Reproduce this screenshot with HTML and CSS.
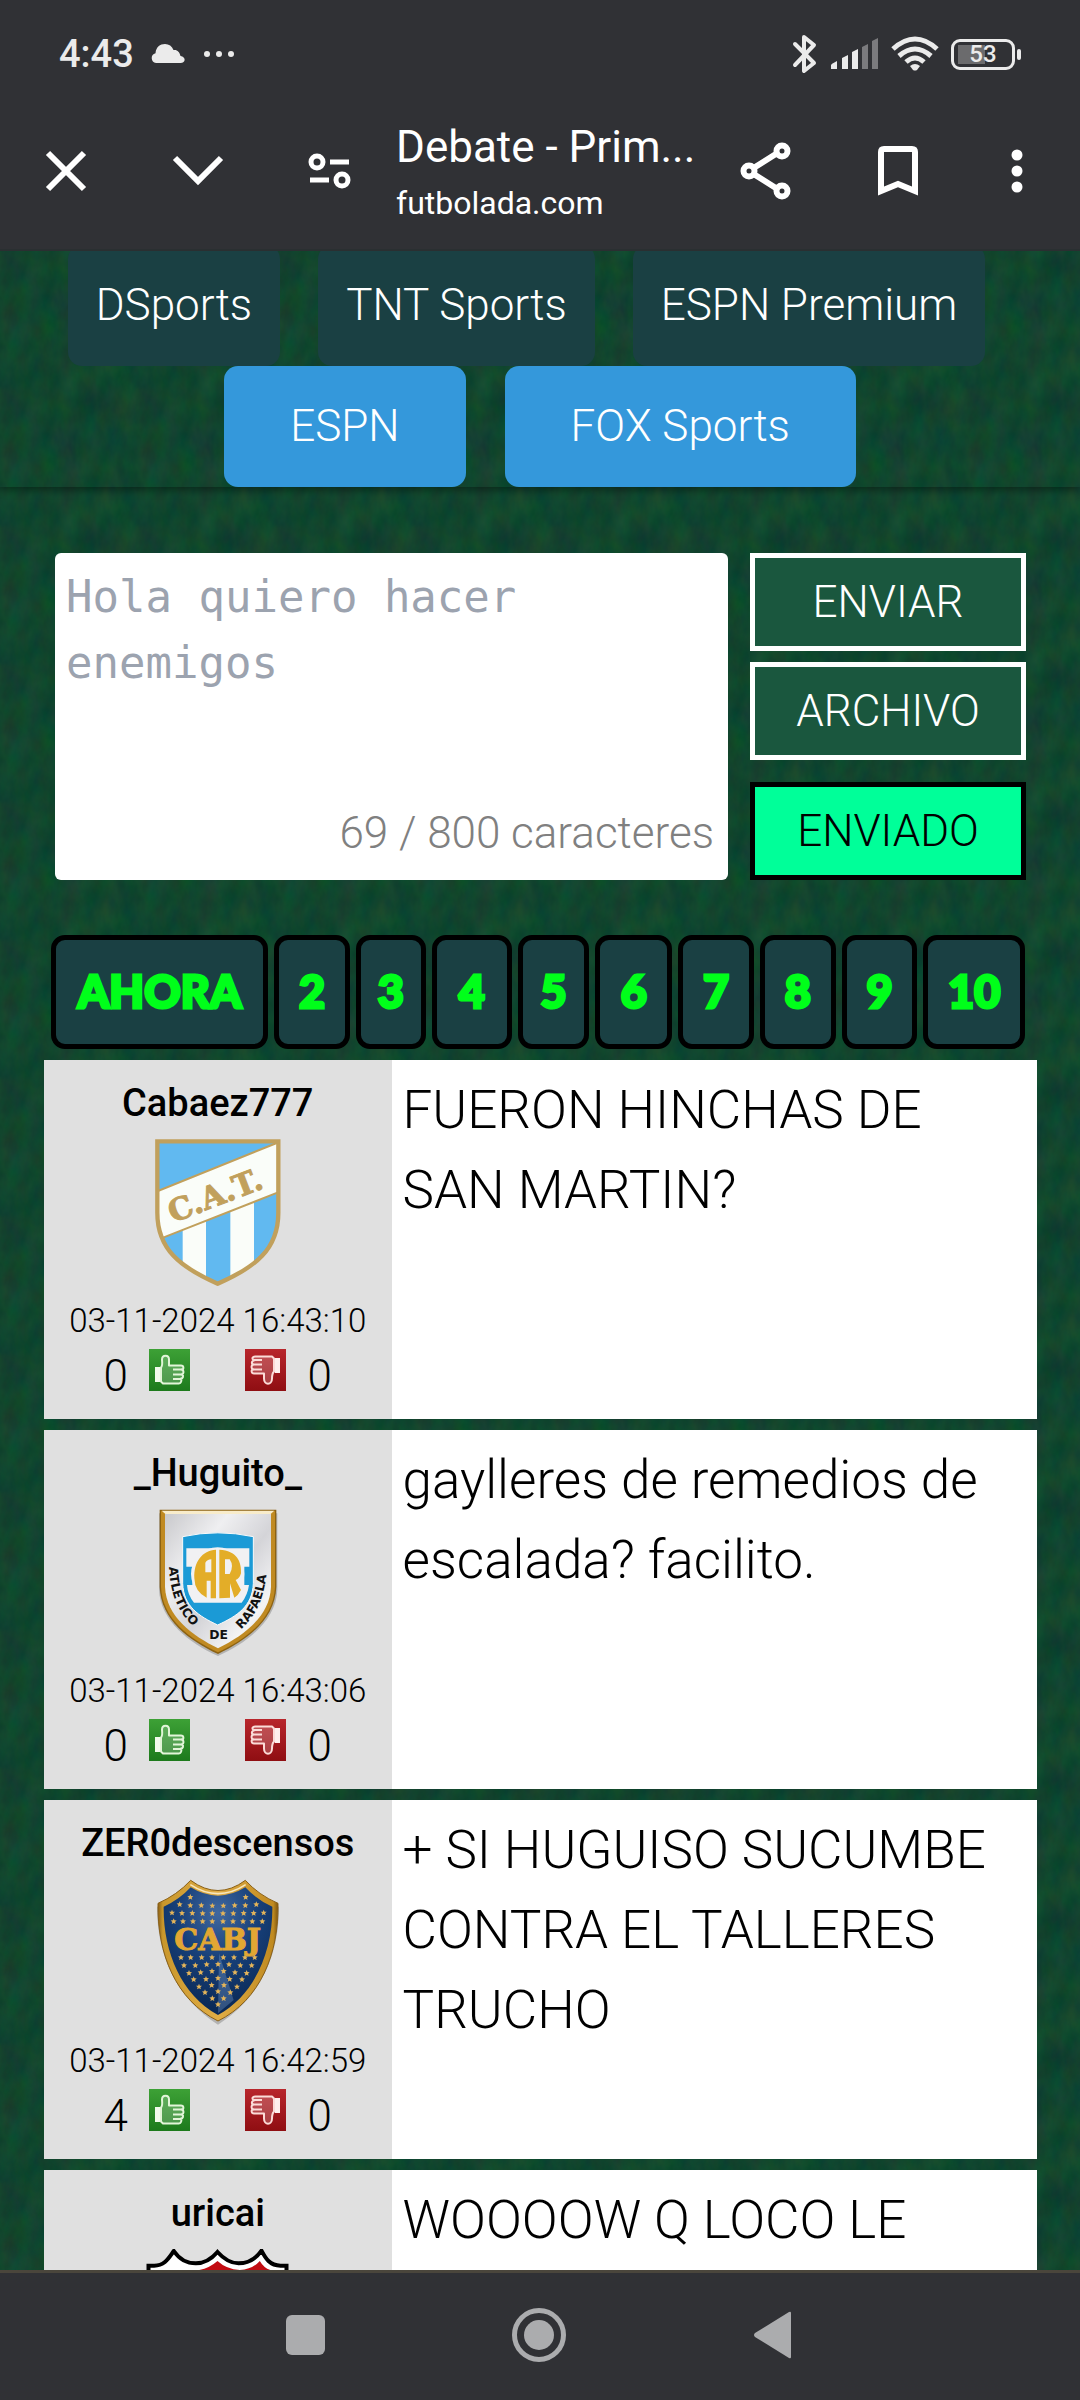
FILE: index.html
```html
<!DOCTYPE html>
<html lang="es">
<head>
<meta charset="utf-8">
<meta name="viewport" content="width=device-width">
<title>Debate - Primera</title>
<link rel="stylesheet" href="styles.css">
</head>
<body>
<svg class="defs" aria-hidden="true">
  <defs>
    <linearGradient id="green" x1="0" y1="0" x2="0" y2="1"><stop offset="0" stop-color="#3da136"/><stop offset="1" stop-color="#1d7a1c"/></linearGradient>
    <linearGradient id="red" x1="0" y1="0" x2="0" y2="1"><stop offset="0" stop-color="#b8262c"/><stop offset="1" stop-color="#8f0e12"/></linearGradient>
    <linearGradient id="gold" x1="0" y1="0" x2="1" y2="0"><stop offset="0" stop-color="#8a5f14"/><stop offset=".04" stop-color="#c9972c"/><stop offset=".5" stop-color="#e0ad45"/><stop offset=".96" stop-color="#c08a20"/><stop offset="1" stop-color="#7c5510"/></linearGradient>
    <linearGradient id="steel" x1="0" y1="0" x2="1" y2="1"><stop offset="0" stop-color="#c9c9cc"/><stop offset=".3" stop-color="#efeff1"/><stop offset=".55" stop-color="#d4d4d8"/><stop offset=".8" stop-color="#f4f4f5"/><stop offset="1" stop-color="#cfcfd2"/></linearGradient>
    <radialGradient id="navy" cx=".5" cy=".2" r=".75"><stop offset="0" stop-color="#4068a0"/><stop offset=".5" stop-color="#173f78"/><stop offset="1" stop-color="#0b2a57"/></radialGradient>
    <symbol id="up" viewBox="0 0 41 42">
      <path fill="url(#green)" d="M0 0h41v42H0z"/>
      <path fill="#fff" fill-opacity=".2" stroke="#e2f5d8" stroke-width="2" stroke-linejoin="round" d="M12 18.500c2-2 1-6 1-8 0-5 7-5 7 0v6h12c3 0 3 4 1 4 2 1 2 4 0 5 2 1 1 4-1 4 1 2 0 5-2 5H14l-2-2z"/>
      <path fill="none" stroke="#e2f5d8" stroke-width="2" d="M24 20.500h9M24 25.500h9M24 30h8"/>
      <path fill="#f2fbec" d="M6 18h5v15H6z"/>
    </symbol>
    <symbol id="down" viewBox="0 0 41 42">
      <path fill="url(#red)" d="M0 0h41v42H0z"/>
      <path fill="#fff" fill-opacity=".2" stroke="#fbdcd8" stroke-width="2" stroke-linejoin="round" d="M29 22.500c-2 2-2 4-2 7 0 7-8 7-8 0v-5H9c-3 0-3-4-1-4-2-1-2-4 0-5-2-1-1-4 1-4-3-2-1-4 1-4h17l2 2z"/>
      <path fill="none" stroke="#fbdcd8" stroke-width="2" d="M17 20.500H8M17 15.500H8M17 11H8"/>
      <path fill="#fff0ee" d="M30 9h5v15h-5z"/>
    </symbol>
    <path id="star" fill="#e3b45a" d="M0-9 2.500-3 9-2.500 4 2 6 8 0 5-6 8-4 2-9-2.500-2.500-3z"/>
  </defs>
</svg>
<div class="screen">
  <header class="chrome">
    <div class="status">
      <span class="clock">4:43</span>
      <svg class="cloud" width="34" height="20" viewBox="0 0 34 20" fill="#ebebeb"><path d="M5 19a5 5 0 0 1-.5-9.800C5 3 9 0 14 0c4 0 7 2 8.500 6 4-.5 6 2 7 6 6 1 5 7 0 7z"/></svg>
      <svg width="32" height="8" viewBox="0 0 32 8" fill="#ebebeb"><circle cx="4" cy="4" r="3"/><circle cx="16" cy="4" r="3"/><circle cx="28" cy="4" r="3"/></svg>
      <div class="signals">
        <svg width="26" height="40" viewBox="0 0 26 40" fill="none" stroke="#ebebeb" stroke-width="4" stroke-linejoin="round" stroke-linecap="round"><path d="m3 10 19 19-10 8V3l10 8L3 31"/></svg>
        <svg width="49" height="32" viewBox="0 0 49 32"><g fill="#ebebeb"><path d="M1 27q0-1 6-4v8H1z"/><path d="M12 20l6-3v14h-6z"/><path d="M22 14l6-3v20h-6z"/></g><g fill="#7b7b7e"><path d="M32 9l6-3v25h-6z"/><path d="M42 3l6-3v31h-6z"/></g></svg>
        <svg width="48" height="36" viewBox="0 0 48 36" fill="none" stroke="#ebebeb" stroke-width="5"><path d="M2 13Q24-7 46 13"/><path d="M8 20q16-14 32 0"/><path d="M15 26q9-8 18 0"/><path fill="#ebebeb" stroke="none" d="M19 30q5-4 10 0l-3 4q-2 1-4 0z"/></svg>
        <span class="battery">53</span>
      </div>
    </div>
    <div class="toolbar">
      <button class="tool" type="button" aria-label="Cerrar"><svg width="44" height="44" viewBox="0 0 44 44"><path d="m4 4 36 36M40 4 4 40"/></svg></button>
      <button class="tool" type="button" aria-label="Minimizar"><svg width="52" height="32" viewBox="0 0 52 32"><path d="m3 3 23 23L49 3"/></svg></button>
      <button class="tool" type="button" aria-label="Información del sitio"><svg width="44" height="40" viewBox="0 0 44 40"><g stroke-width="5"><circle cx="9" cy="11" r="6"/><circle cx="34" cy="29" r="6"/><path d="M22 11h19M2 29h19"/></g></svg></button>
      <div class="page-title"><span class="title">Debate - Prim...</span><span class="host">futbolada.com</span></div>
      <button class="tool" type="button" aria-label="Compartir"><svg width="52" height="58" viewBox="0 0 52 58"><path d="m12 27 27-17M12 31l27 17"/><circle cx="9" cy="29" r="5.500"/><circle cx="42" cy="9" r="5.500"/><circle cx="42" cy="49" r="5.500"/></svg></button>
      <button class="tool" type="button" aria-label="Guardar"><svg width="40" height="50" viewBox="0 0 40 50"><path d="M3 45V6q0-3 3-3h28q3 0 3 3v39L20 38z"/></svg></button>
      <button class="tool more" type="button" aria-label="Más"><svg width="12" height="46" viewBox="0 0 12 46"><g fill="#fff" stroke="none"><circle cx="6" cy="7" r="5.500"/><circle cx="6" cy="23" r="5.500"/><circle cx="6" cy="39" r="5.500"/></g></svg></button>
    </div>
  </header>

  <main class="page">
    <nav class="channels" aria-label="Canales">
      <div class="row packs"><a class="chip dark" href="#dsports">DSports</a><a class="chip dark" href="#tnt">TNT Sports</a><a class="chip dark" href="#premium">ESPN Premium</a></div>
      <div class="row"><a class="chip blue" href="#espn">ESPN</a><a class="chip blue" href="#fox">FOX Sports</a></div>
    </nav>

    <form class="compose">
      <div class="editor">
        <textarea aria-label="Mensaje" placeholder="Hola quiero hacer enemigos"></textarea>
        <span class="count">69 / 800 caracteres</span>
      </div>
      <div class="actions">
        <button type="button">ENVIAR</button>
        <button type="button">ARCHIVO</button>
        <button type="button" class="sent">ENVIADO</button>
      </div>
    </form>

    <nav class="pages" aria-label="Páginas">
      <a href="#p1">AHORA</a><a href="#p2">2</a><a href="#p3">3</a><a href="#p4">4</a><a href="#p5">5</a><a href="#p6">6</a><a href="#p7">7</a><a href="#p8">8</a><a href="#p9">9</a><a href="#p10">10</a>
    </nav>

    <section class="posts">
      <article class="post">
        <div class="author">
          <strong class="name">Cabaez777</strong>
          <svg class="crest" viewBox="338 234 390 444" role="img" aria-label="Atlético Tucumán">
            <clipPath id="c1"><path d="M351 241H714V455C714 565 645 619 532 668C420 619 351 565 351 455Z"/></clipPath>
            <g clip-path="url(#c1)"><path fill="#61b9f0" d="M340 230h390v450H340z"/><path fill="#fafdf9" d="M427 400h70v280h-70zM570 400h71v280h-71z"/><path fill="#fafdf9" stroke="#c1a05c" stroke-width="6" d="M340 395 724 240V390L340 541z"/></g>
            <path fill="none" stroke="#c1a05c" stroke-width="13" d="M351 241H714V455C714 565 645 619 532 668C420 619 351 565 351 455Z"/>
            <text class="cat" transform="translate(398 486) rotate(-21)">C.A.T.</text>
          </svg>
          <time class="date">03-11-2024 16:43:10</time>
          <div class="votes"><span>0</span><button type="button" aria-label="Me gusta"><svg width="41" height="42"><use href="#up"/></svg></button><button class="no" type="button" aria-label="No me gusta"><svg width="41" height="42"><use href="#down"/></svg></button><span>0</span></div>
        </div>
        <p class="text">FUERON HINCHAS DE SAN MARTIN?</p>
      </article>

      <article class="post">
        <div class="author">
          <strong class="name">_Huguito_</strong>
          <svg class="crest" viewBox="338 237 390 444" role="img" aria-label="Atlético de Rafaela">
            <path fill="#000" opacity=".2" d="M356 250H711V480C708 570 620 640 533 678C445 640 360 570 356 480Z"/>
            <path fill="#8c6212" d="M358 239H708V470C704 570 620 630 533 672C445 630 362 570 358 470Z"/>
            <path fill="#c08a22" d="M362 243H704V470C700 568 618 626 533 667C448 626 366 568 362 470Z"/>
            <path fill="#f8eccb" d="M364 242H702L690 253H376z"/>
            <path fill="url(#steel)" d="M374 252H692V470C688 560 612 615 533 655C454 615 378 560 374 470Z"/>
            <path fill="#1b9ad6" stroke="#fafafa" stroke-width="3" d="M427 320Q532 297 639 320V460C636 530 590 558 532 585C475 558 430 530 427 460Z"/>
            <path fill="#f1f1f3" d="M438 355H627V410H612V465H626Q622 495 604 518H461Q442 495 440 465H456V410H438z"/>
            <circle cx="532" cy="432" r="80" fill="#f1f1f3"/>
            <path fill="#e3ad28" d="M462 445C460 395 485 362 527 359V505H511V452H499V503Q463 486 462 445zM537 359C590 362 604 395 602 430Q598 445 586 450L602 480Q594 496 582 503L569 460V503L537 505z"/>
            <path fill="#f1f1f3" d="M495 427V398Q500 389 513 388V427zM554 388H568Q582 408 568 432H554z"/>
            <g class="rafaela">
              <path id="left-arc" fill="none" d="M386 411C388 480 408 552 478 606"/>
              <path id="right-arc" fill="none" d="M602 598C660 545 676 480 681 405"/>
              <text><textPath href="#left-arc">ATLETICO</textPath></text>
              <text><textPath href="#right-arc">RAFAELA</textPath></text>
              <text x="507" y="626">DE</text>
            </g>
          </svg>
          <time class="date">03-11-2024 16:43:06</time>
          <div class="votes"><span>0</span><button type="button" aria-label="Me gusta"><svg width="41" height="42"><use href="#up"/></svg></button><button class="no" type="button" aria-label="No me gusta"><svg width="41" height="42"><use href="#down"/></svg></button><span>0</span></div>
        </div>
        <p class="text">gaylleres de remedios de escalada? facilito.</p>
      </article>

      <article class="post">
        <div class="author">
          <strong class="name">ZER0descensos</strong>
          <svg class="crest" viewBox="338 237 390 444" role="img" aria-label="Boca Juniors">
            <path fill="#000" opacity=".2" d="M350 320L716 320C716 480 650 600 533 674C418 600 350 480 350 320z"/>
            <path fill="url(#gold)" stroke="#8a6018" stroke-width="3" d="M451 241Q533 302 615 241Q655 285 713 310C716 460 660 600 533 663C406 600 350 460 353 310Q410 285 451 241z"/>
            <path fill="none" stroke="#f7e6bd" stroke-width="5" d="M450 254Q533 308 616 254"/>
            <path fill="url(#navy)" d="M451 262Q533 312 615 262Q650 300 696 320C698 450 645 585 533 645C421 585 368 450 370 320Q416 300 451 262z"/>
            <path fill="#8fb4e0" opacity=".3" d="M536 460 580 600 533 640z"/>
            <g class="stars">
              <use href="#star" x="450" y="291"/><use href="#star" x="616" y="291"/>
              <use href="#star" x="418" y="313"/><use href="#star" x="450" y="316"/><use href="#star" x="483" y="316"/><use href="#star" x="516" y="317"/><use href="#star" x="549" y="317"/><use href="#star" x="583" y="316"/><use href="#star" x="615" y="316"/><use href="#star" x="648" y="313"/>
              <use href="#star" x="395" y="338"/><use href="#star" x="425" y="339"/><use href="#star" x="456" y="339"/><use href="#star" x="487" y="340"/><use href="#star" x="516" y="340"/><use href="#star" x="548" y="340"/><use href="#star" x="579" y="340"/><use href="#star" x="610" y="339"/><use href="#star" x="640" y="339"/><use href="#star" x="670" y="338"/>
              <use href="#star" x="400" y="364"/><use href="#star" x="428" y="364"/><use href="#star" x="458" y="364"/><use href="#star" x="487" y="364"/><use href="#star" x="516" y="364"/><use href="#star" x="548" y="364"/><use href="#star" x="578" y="364"/><use href="#star" x="608" y="364"/><use href="#star" x="636" y="364"/><use href="#star" x="666" y="364"/>
              <use href="#star" x="422" y="472"/><use href="#star" x="451" y="472"/><use href="#star" x="484" y="472"/><use href="#star" x="515" y="472"/><use href="#star" x="549" y="472"/><use href="#star" x="581" y="472"/><use href="#star" x="614" y="472"/><use href="#star" x="643" y="472"/>
              <use href="#star" x="431" y="496"/><use href="#star" x="465" y="496"/><use href="#star" x="499" y="493"/><use href="#star" x="533" y="492"/><use href="#star" x="566" y="493"/><use href="#star" x="600" y="496"/><use href="#star" x="634" y="496"/>
              <use href="#star" x="446" y="519"/><use href="#star" x="481" y="517"/><use href="#star" x="515" y="513"/><use href="#star" x="550" y="513"/><use href="#star" x="584" y="517"/><use href="#star" x="619" y="519"/>
              <use href="#star" x="460" y="538"/><use href="#star" x="497" y="537"/><use href="#star" x="533" y="534"/><use href="#star" x="568" y="537"/><use href="#star" x="605" y="538"/>
              <use href="#star" x="476" y="560"/><use href="#star" x="514" y="555"/><use href="#star" x="551" y="555"/><use href="#star" x="590" y="560"/>
              <use href="#star" x="494" y="577"/><use href="#star" x="533" y="574"/><use href="#star" x="570" y="577"/>
              <use href="#star" x="516" y="595"/><use href="#star" x="550" y="595"/><use href="#star" x="533" y="613"/>
            </g>
            <text class="cabj" x="532" y="451" text-anchor="middle">CABJ</text>
          </svg>
          <time class="date">03-11-2024 16:42:59</time>
          <div class="votes"><span>4</span><button type="button" aria-label="Me gusta"><svg width="41" height="42"><use href="#up"/></svg></button><button class="no" type="button" aria-label="No me gusta"><svg width="41" height="42"><use href="#down"/></svg></button><span>0</span></div>
        </div>
        <p class="text">+ SI HUGUISO SUCUMBE CONTRA EL TALLERES TRUCHO</p>
      </article>

      <article class="post">
        <div class="author">
          <strong class="name">uricai</strong>
          <svg class="crest wide" viewBox="76 57 434 444" role="img" aria-label="Escudo">
            <path fill="#fff" stroke="#000" stroke-width="12" d="M86 300V107H103C135 107 146 85 162 63C180 90 203 100 228 100C255 100 275 87 293 66C312 87 330 100 356 100C384 100 407 88 425 62C437 85 450 107 482 107H500V300C480 400 380 450 293 490C206 450 106 400 86 300z"/>
            <path fill="#c20c12" d="M225 122Q265 118 293 93Q320 118 360 120Q398 118 420 93Q434 118 460 122L160 400z"/>
          </svg>
        </div>
        <p class="text">WOOOOW Q LOCO LE</p>
      </article>
    </section>
  </main>

  <nav class="system" aria-label="Sistema">
    <button type="button" aria-label="Recientes"><svg width="54" height="54" viewBox="0 0 54 54"><rect x="8" y="7" width="39" height="40" rx="6"/></svg></button>
    <button type="button" aria-label="Inicio"><svg width="54" height="54" viewBox="0 0 54 54"><circle cx="27" cy="27" r="24.500" fill="none" stroke="#abacae" stroke-width="5"/><circle cx="27" cy="27" r="15"/></svg></button>
    <button type="button" aria-label="Atrás"><svg width="54" height="54" viewBox="0 0 54 54"><path d="M9 25 43 4q2-1 2 1v44q0 2-2 1L9 29q-2-2 0-4z"/></svg></button>
  </nav>
</div>
</body>
</html>
```
FILE: styles.css
```css
* { box-sizing: border-box; }
body {
  margin: 0;
  font-family: Roboto, sans-serif;
  font-weight: 300;
  font-size: 44px;
  color: #000;
}
a { color: inherit; text-decoration: none; }
button { font: inherit; color: inherit; margin: 0; padding: 0; border: 0; background: none; }
svg { display: block; flex: none; }
.defs { position: absolute; width: 0; height: 0; }

.screen { display: flex; flex-direction: column; height: 100vh; }

/* Browser chrome */
.chrome { flex: none; background: #303135; color: #fff; padding-bottom: 15px; border-bottom: 2px solid #2a2f31; }
.status { display: flex; align-items: center; height: 108px; padding: 0 59px; color: #ebebeb; }
.clock { font-size: 38px; font-weight: 500; line-height: 44px; margin-right: 17px; }
.cloud { margin-right: 18px; }
.signals { display: flex; align-items: center; margin-left: auto; gap: 12px; }
.battery {
  position: relative;
  display: grid;
  place-items: center;
  width: 64px;
  height: 31px;
  margin-right: 6px;
  border: 3px solid #ebebeb;
  border-radius: 9px;
  background: linear-gradient(#6b6b6d, #6b6b6d) 4px 3px / 27px 19px no-repeat;
  font-size: 24px;
  font-weight: 500;
  line-height: 25px;
}
.battery::after { content: ""; position: absolute; right: -9px; top: 7px; width: 4px; height: 11px; border-radius: 2px; background: #ebebeb; }
.toolbar { display: flex; align-items: center; height: 126px; padding-right: 10px; }
.tool { flex: none; width: 132px; height: 126px; display: grid; place-items: center; }
.tool svg { fill: none; stroke: #fff; stroke-width: 6; }
.tool.more { width: 106px; }
.page-title { flex: 1; min-width: 0; display: flex; flex-direction: column; gap: 4px; padding-top: 8px; font-weight: 400; line-height: 52px; white-space: nowrap; }
.title { font-size: 44px; }
.host { font-size: 32px; }

/* Page */
.page {
  flex: 1;
  min-height: 0;
  overflow: hidden;
  background-color: #11462e;
  background-image: url("data:image/svg+xml,%3Csvg xmlns='http://www.w3.org/2000/svg' width='138' height='138'%3E%3Cfilter id='n' x='0' y='0' width='100%25' height='100%25' color-interpolation-filters='sRGB'%3E%3CfeTurbulence type='fractalNoise' baseFrequency='.05 .03' numOctaves='4' stitchTiles='stitch'/%3E%3CfeColorMatrix values='.12 0 0 0 .006 0 .12 0 0 .21 0 0 .08 0 .14 0 0 0 0 1'/%3E%3C/filter%3E%3Crect width='138' height='138' filter='url(%23n)'/%3E%3C/svg%3E");
}
.channels { display: flex; flex-direction: column; margin-top: -6px; box-shadow: 0 3px 8px rgba(0, 0, 0, .4); }
.row { display: flex; justify-content: center; gap: 39px; }
.packs { padding-right: 27px; gap: 38px; }
.chip { height: 121px; line-height: 121px; border-radius: 14px; color: #fff; white-space: nowrap; }
.dark { padding: 0 28px; background: #1a4043; }
.blue { padding: 0 66px; background: #3498db; }

.compose { display: flex; gap: 22px; padding: 66px 54px 0 55px; }
.editor { position: relative; flex: 1; display: flex; }
.editor textarea {
  flex: 1;
  min-width: 0;
  padding: 11px;
  border: 0;
  border-radius: 6px;
  resize: none;
  background: #fff;
  font: 400 44px/66px "DejaVu Sans Mono", monospace;
}
.editor textarea::placeholder { color: #9ca3af; opacity: 1; }
.count { position: absolute; right: 14px; bottom: 21px; line-height: 52px; color: #808080; }
.actions { display: flex; flex-direction: column; gap: 11px; width: 276px; }
.actions button { height: 98px; border: 5px solid #fff; background: #1a573e; color: #fff; }
.actions .sent { margin-top: 11px; border-color: #000; background: #00ff99; color: #000; }

.pages {
  display: grid;
  grid-template-columns: 218fr 76fr 70fr 80fr 72fr 77fr 76fr 76fr 76fr 102fr;
  gap: 6px;
  padding: 55px 55px 0 51px;
}
.pages a {
  height: 114px;
  border: 5px solid #000;
  border-radius: 14px;
  background: #1a4043;
  color: #00ff1a;
  font-family: Lato, sans-serif;
  font-size: 45px;
  font-weight: 900;
  line-height: 102px;
  text-align: center;
  -webkit-text-stroke: 3px #00ff1a;
}

.posts { display: flex; flex-direction: column; gap: 11px; padding: 11px 43px 11px 44px; }
.post { display: flex; min-height: 359px; background: #fff; }
.author { flex: none; width: 35%; display: flex; flex-direction: column; align-items: center; padding: 19px 0 16px; background: #e0e0e0; }
.name { font-size: 38px; font-weight: 500; line-height: 48px; }
.crest { width: 130px; height: 148px; margin: 12px 0 14px; }
.crest.wide { width: 145px; }
.date { font-size: 33px; line-height: 40px; }
.votes { display: flex; margin-top: 8px; line-height: 54px; }
.votes span { width: 25px; text-align: center; }
.votes button { height: 42px; margin-left: 21px; }
.votes .no { margin: 0 21px 0 55px; }
.text { flex: 1; margin: 0; padding: 10px 11px; font-size: 53px; line-height: 80px; }

.cat { font: 700 92px "DejaVu Serif", serif; fill: #c1a05c; stroke: #c1a05c; stroke-width: 3px; }
.cabj { font: 700 90px "DejaVu Serif", serif; fill: #e2a733; stroke: #e2a733; stroke-width: 3px; }
.rafaela text { font: 700 37px "DejaVu Sans", sans-serif; fill: #111; }

/* System navigation */
.system { flex: none; display: flex; justify-content: center; gap: 180px; height: 130px; padding: 0 2px 4px 0; border-top: 3px solid #4a463c; background: #303135; }
.system button { display: grid; place-items: center; }
.system svg { fill: #abacae; }
```
